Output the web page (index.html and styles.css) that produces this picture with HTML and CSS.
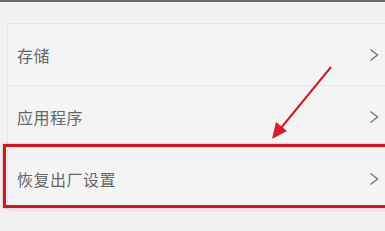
FILE: index.html
```html
<!DOCTYPE html>
<html>
  <head>
    <meta charset="UTF-8">
    <title>设置</title>
    <link rel="stylesheet" href="styles.css">
  </head>
  <body>
    <div class="topbar"></div>
    <div class="page">
      <div class="card">
        <div class="row">
          <span class="label">存储</span>
          <svg class="chev" width="10" height="14" viewBox="0 0 10 14"><path d="M1.5 1.5 L8.5 7 L1.5 12.5" /></svg>
        </div>
        <div class="row">
          <span class="label">应用程序</span>
          <svg class="chev" width="10" height="14" viewBox="0 0 10 14"><path d="M1.5 1.5 L8.5 7 L1.5 12.5" /></svg>
        </div>
        <div class="row last">
          <span class="label">恢复出厂设置</span>
          <svg class="chev" width="10" height="14" viewBox="0 0 10 14"><path d="M1.5 1.5 L8.5 7 L1.5 12.5" /></svg>
        </div>
      </div>
      <!-- annotation: red frame + arrow -->
      <div class="mark"></div>
      <svg class="arrow" width="385" height="231" viewBox="0 0 385 231">
        <line x1="331" y1="67" x2="281" y2="128" />
        <polygon points="272,139 276,122 287,131" />
      </svg>
    </div>
  </body>
</html>
```

FILE: styles.css
```css
body {
  margin: 0;
  background-color: #f1f1f1;
  font-family: "Noto Sans CJK SC", "Noto Sans", sans-serif;
  overflow: hidden;
}

.topbar {
  height: 2px;
  background-color: #6a6a6a;
}

.page {
  position: relative;
  height: 229px;
  padding: 21px 0 0 7px;
  box-sizing: border-box;
}

.card {
  background-color: #f4f4f4;
  border: 1px solid #e3e3e3;
  border-right: none;
  border-radius: 4px 0 0 4px;
}

.row {
  display: flex;
  align-items: center;
  justify-content: space-between;
  height: 61px;
  padding: 0 6px 0 9px;
  border-bottom: 1px solid #e6e6e6;
}

.row.last {
  height: 62px;
  border-bottom: none;
}

.label {
  font-size: 16px;
  color: #666;
  letter-spacing: 0.5px;
}

.chev path {
  fill: none;
  stroke: #777;
  stroke-width: 1.4;
}

.mark {
  position: absolute;
  left: 3px;
  top: 142px;
  width: 390px;
  height: 58px;
  border: 3px solid #c81a26;
  box-shadow: 0 0 2px rgba(211, 32, 42, 0.5);
}

.arrow {
  position: absolute;
  left: 0;
  top: -2px;
}

.arrow line {
  stroke: #c8202a;
  stroke-width: 2;
}

.arrow polygon {
  fill: #d3202a;
}
```
